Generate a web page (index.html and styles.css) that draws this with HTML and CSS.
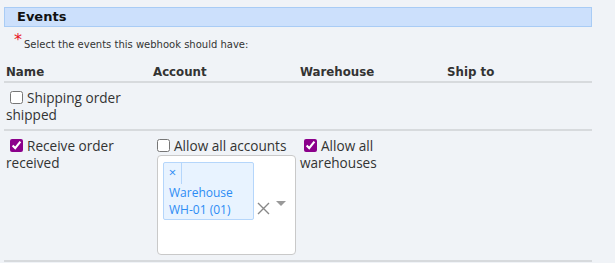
FILE: index.html
```html
<!DOCTYPE html>
<html lang="en">
<head>
    <meta charset="UTF-8">
    <title>Webhook events</title>
    <link rel="stylesheet" href="styles.css">
</head>
<body>
    <div class="section">
        <div class="section-title">Events</div>

        <p class="hint"><span class="req">*</span>Select the events this webhook should have:</p>

        <table class="events">
            <thead>
                <tr>
                    <th>Name</th>
                    <th>Account</th>
                    <th>Warehouse</th>
                    <th>Ship to</th>
                </tr>
            </thead>
            <tbody>
                <tr>
                    <td><label><input type="checkbox">Shipping order shipped</label></td>
                    <td></td>
                    <td></td>
                    <td></td>
                </tr>
                <tr>
                    <td><label><input type="checkbox" checked>Receive order received</label></td>
                    <td>
                        <label><input type="checkbox">Allow all accounts</label>
                        <div class="multi">
                            <div class="values">
                                <div class="tag">
                                    <div class="tag-top"><span class="tag-x">&times;</span></div>
                                    <div class="tag-label">Warehouse WH-01 (01)</div>
                                </div>
                            </div>
                            <span class="clear">
                                <svg width="13" height="13" viewBox="0 0 13 13"><path d="M1 1 L12 12 M12 1 L1 12" stroke="#888" stroke-width="1.4" fill="none"/></svg>
                            </span>
                            <span class="arrow"></span>
                        </div>
                    </td>
                    <td><label><input type="checkbox" checked>Allow all warehouses</label></td>
                    <td></td>
                </tr>
            </tbody>
        </table>
    </div>
</body>
</html>
```

FILE: styles.css
```css
*{
    box-sizing: border-box;
}

body{
    margin: 0;
    padding: 7px 23px 0 4px;
    background-color: #f0f3f7;
    color: #333;
    font-family: "Open Sans", "Noto Sans", sans-serif;
    font-size: 13.6px;
}

.section-title{
    background-color: #cce0fc;
    border: 1px solid #a9ccf5;
    height: 20px;
    padding: 0 12px;
    font-family: "DejaVu Sans", sans-serif;
    font-weight: bold;
    font-size: 13px;
    line-height: 18px;
    color: #111;
}

.hint{
    margin: 6px 0 0 10px;
    font-family: "DejaVu Sans", sans-serif;
    font-size: 10px;
    height: 16px;
}

.req{
    color: #e8141e;
    font-size: 16px;
    position: relative;
    top: -3px;
    margin-right: 2px;
}

.events{
    width: 588px;
    border-collapse: collapse;
    margin-top: 12px;
}

.events th{
    font-family: "DejaVu Sans", sans-serif;
    font-size: 11.8px;
    text-align: left;
    padding: 4px 2px 2px;
    width: 147px;
    border-bottom: 2px solid #d7dadd;
}

.events td{
    vertical-align: top;
    padding: 6px 2px 5px;
    border-bottom: 2px solid #d7dadd;
    line-height: 17px;
}

.events tbody tr:first-child td{
    height: 48px;
}

label{
    display: block;
}

input[type="checkbox"]{
    width: 13px;
    height: 13px;
    margin: 0 4px 0 4px;
    vertical-align: -1px;
    accent-color: #8b008b;
}

.multi{
    display: flex;
    align-items: center;
    width: 139px;
    height: 100px;
    margin: 1px 0 0 4px;
    background-color: #fff;
    border: 1px solid #c9c9c9;
    border-radius: 4px;
    padding: 6px 0 6px 5px;
}

.values{
    align-self: flex-start;
}

.tag{
    width: 91px;
    height: 58px;
    background-color: #e8f3ff;
    border: 1px solid #b5d6fb;
    border-radius: 2px;
    color: #2c8cf4;
}

.tag-top{
    height: 21px;
}

.tag-x{
    display: inline-block;
    width: 18px;
    height: 21px;
    border-right: 1px solid #b5d6fb;
    text-align: center;
    font-size: 13px;
    line-height: 19px;
}

.tag-label{
    padding: 0 5px;
    line-height: 17px;
    font-size: 12px;
}

.clear{
    margin-left: 3px;
    margin-top: 6px;
    display: flex;
}

.arrow{
    width: 0;
    height: 0;
    border-left: 5px solid transparent;
    border-right: 5px solid transparent;
    border-top: 5px solid #999;
    margin-left: 6px;
    margin-top: -4px;
}
```
